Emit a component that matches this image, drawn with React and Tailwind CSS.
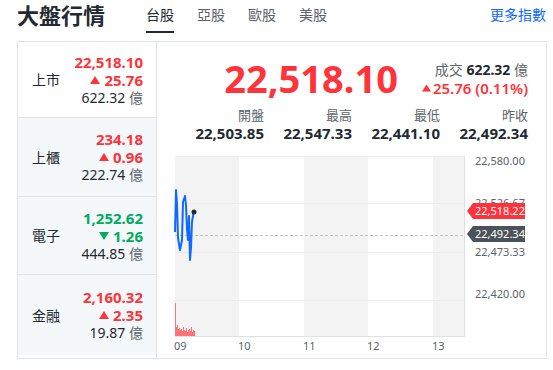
import React from 'react';

const rows = [
  { name: '上市', price: '22,518.10', change: '25.76', vol: '622.32', up: true, h: 'h-[76px]', bg: 'bg-white' },
  { name: '上櫃', price: '234.18', change: '0.96', vol: '222.74', up: true, h: 'h-[79px]', bg: 'bg-[#f5f8fa]' },
  { name: '電子', price: '1,252.62', change: '1.26', vol: '444.85', up: false, h: 'h-[78px]', bg: 'bg-[#f5f8fa]' },
  { name: '金融', price: '2,160.32', change: '2.35', vol: '19.87', up: true, h: 'h-[80px]', bg: 'bg-[#f5f8fa]' },
];

const stats = [
  { label: '開盤', value: '22,503.85' },
  { label: '最高', value: '22,547.33' },
  { label: '最低', value: '22,441.10' },
  { label: '昨收', value: '22,492.34' },
];

const tabs = ['台股', '亞股', '歐股', '美股'];

function Tri({ up, className }) {
  return (
    <svg viewBox="0 0 10 8" className={className}>
      {up ? <path d="M5 0 L10 8 L0 8 Z" fill="#ff333a" /> : <path d="M0 0 L10 0 L5 8 Z" fill="#00ab5e" />}
    </svg>
  );
}

// price path in page coordinates
const pricePts = [
  [175, 232], [176, 190], [177, 204], [178, 238], [180, 250], [182, 240], [183, 202],
  [185, 196], [186, 205], [187, 230], [188, 240], [189, 216], [190, 260], [191, 248],
  [192, 222], [193, 216], [194, 212],
];
const volBars = [33, 9, 11, 7, 8, 6, 7, 5, 9, 6, 5, 8, 4, 6, 7, 5, 9, 4, 6, 5];

function Chart() {
  return (
    <svg width="389" height="208" viewBox="0 0 389 208" className="block">
      <g transform="translate(-157,-150)">
        <rect x="175" y="156" width="64" height="180" fill="#f3f3f3" />
        <rect x="304" y="156" width="64" height="180" fill="#f3f3f3" />
        <rect x="433" y="156" width="32" height="180" fill="#f3f3f3" />
        {[156.5, 203.5, 252.5, 300.5].map((y) => (
          <line key={y} x1="175" x2="465" y1={y} y2={y} stroke="#ececec" strokeWidth="1" />
        ))}
        <line x1="464.5" x2="464.5" y1="156" y2="336" stroke="#dde0e5" />
        <line x1="175" x2="465" y1="336.5" y2="336.5" stroke="#dde0e5" />
        <line x1="175" x2="465" y1="235.5" y2="235.5" stroke="#c4c4c4" strokeDasharray="3 2" />
        {volBars.map((h, i) => (
          <rect key={i} x={175 + i} y={336 - h} width="1" height={h} fill="#ff5a62" opacity="0.85" />
        ))}
        <polyline
          points={pricePts.map((p) => p.join(',')).join(' ')}
          fill="none"
          stroke="#0f69ff"
          strokeWidth="2"
          strokeLinejoin="round"
        />
        <circle cx="194" cy="212" r="2.5" fill="#232a31" />
        <g fill="#5b636a" fontSize="11" fontFamily="'Noto Sans', sans-serif">
          <text x="475" y="165">22,580.00</text>
          <text x="475" y="207">22,526.67</text>
          <text x="475" y="256">22,473.33</text>
          <text x="475" y="298">22,420.00</text>
          <text x="174" y="350">09</text>
          <text x="238" y="350">10</text>
          <text x="303" y="350">11</text>
          <text x="367" y="350">12</text>
          <text x="432" y="350">13</text>
        </g>
        <path d="M467 211 L473 203 L525 203 L525 219 L473 219 Z" fill="#ff333a" />
        <path d="M467 234 L473 226 L525 226 L525 242 L473 242 Z" fill="#4b5259" />
        <g fill="#ffffff" fontSize="11" fontFamily="'Noto Sans', sans-serif">
          <text x="475" y="215">22,518.22</text>
          <text x="475" y="238">22,492.34</text>
        </g>
      </g>
    </svg>
  );
}

export default function App() {
  return (
    <div className="w-[553px] h-[370px] bg-white text-[#232a31] font-['Noto_Sans','Noto_Sans_CJK_TC',sans-serif]">
      {/* header */}
      <div className="h-[41px] flex items-start pl-[17px] pr-[7px]">
        <h1 className="text-[22px] leading-[30px] font-bold">大盤行情</h1>
        <div className="flex gap-[23px] ml-[41px]">
          {tabs.map((t, i) => (
            <div
              key={t}
              className={
                i === 0
                  ? 'h-[33px] leading-[30px] text-[14px] border-b-2 border-[#232a31] text-[#232a31]'
                  : 'h-[33px] leading-[30px] text-[14px] border-b-2 border-transparent text-[#5b636a]'
              }
            >
              {t}
            </div>
          ))}
        </div>
        <a className="ml-auto text-[14px] leading-[30px] text-[#0f69ff]">更多指數</a>
      </div>

      {/* card */}
      <div className="ml-[17px] w-[530px] border border-[#e0e4e9] flex">
        <div className="w-[139px] border-r border-[#e0e4e9] flex flex-col">
          {rows.map((r, i) => (
            <div
              key={r.name}
              className={`${r.h} ${r.bg} flex items-center justify-between pl-[14px] pr-[13px] ${i < 3 ? 'border-b border-[#e0e4e9]' : ''}`}
            >
              <span className="text-[14px]">{r.name}</span>
              <div className="flex flex-col items-end leading-[18px]">
                <span className={`text-[15px] font-bold ${r.up ? 'text-[#ff333a]' : 'text-[#00ab5e]'}`}>{r.price}</span>
                <span className={`flex items-center gap-[4px] text-[15px] font-bold ${r.up ? 'text-[#ff333a]' : 'text-[#00ab5e]'}`}>
                  <Tri up={r.up} className="w-[10px] h-[8px]" />
                  {r.change}
                </span>
                <span className="text-[14px]">
                  {r.vol} <span className="text-[#5b636a]">億</span>
                </span>
              </div>
            </div>
          ))}
        </div>

        <div className="flex-1 flex flex-col">
          <div className="flex justify-end items-start gap-[24px] pt-[17px] pr-[18px]">
            <div className="text-[38px] leading-[38px] font-bold text-[#ff333a]">22,518.10</div>
            <div className="pt-[2px] flex flex-col items-end leading-[18px]">
              <div className="text-[14px]">
                <span className="text-[#5b636a]">成交 </span>
                <span className="font-bold">622.32</span>
                <span className="text-[#5b636a]"> 億</span>
              </div>
              <div className="flex items-center gap-[2px] text-[15px] font-semibold text-[#ff333a]">
                <Tri up className="w-[9px] h-[8px]" />
                25.76 (0.11%)
              </div>
            </div>
          </div>

          <div className="flex justify-end pr-[18px] mt-[10px]">
            {stats.map((s) => (
              <div key={s.label} className="w-[88px] flex flex-col items-end">
                <span className="text-[13px] leading-[17px] text-[#5b636a]">{s.label}</span>
                <span className="text-[15px] leading-[18px] font-bold">{s.value}</span>
              </div>
            ))}
          </div>

          <div className="mt-[8px]">
            <Chart />
          </div>
        </div>
      </div>
    </div>
  );
}
